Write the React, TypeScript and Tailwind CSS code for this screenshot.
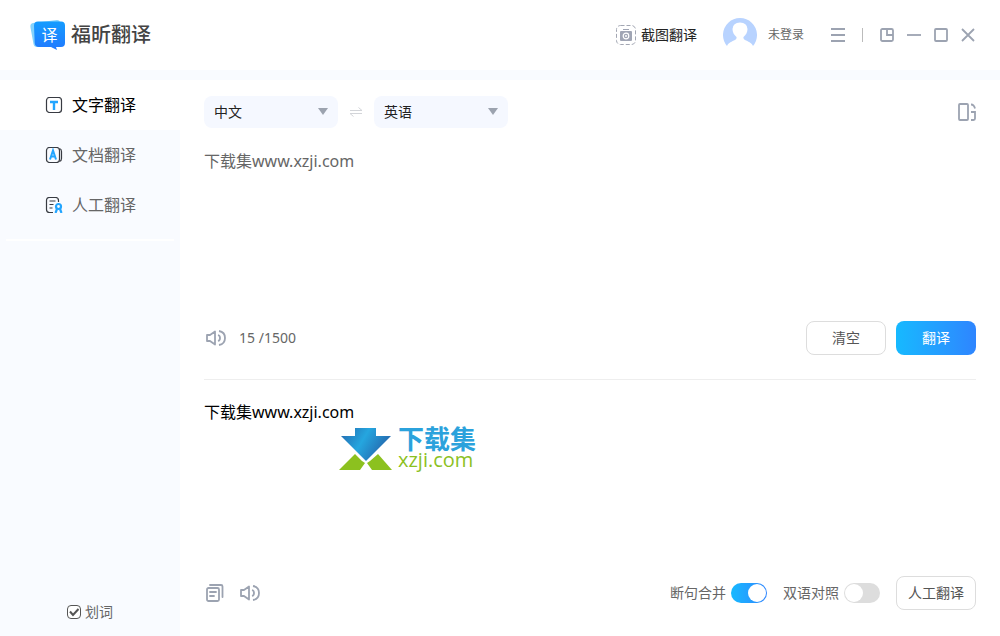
import React, { useState } from "react";

const MAX_LENGTH = 1500;

const LogoIcon = () => (
  <span className="relative block h-[30px] w-[35px]">
    <svg viewBox="0 0 35 30" className="h-full w-full" aria-hidden="true">
      <defs>
        <linearGradient id="logo" x1="0" y1="0" x2="0" y2="1">
          <stop offset="0" stopColor="#149cff" />
          <stop offset="1" stopColor="#2179ff" />
        </linearGradient>
      </defs>
      <path d="M3 3 27 0q3 0 3 3v24H7Q4 27 3.500 24L.4 7Q0 3.500 3 3Z" fill="#84d2fc" />
      <path d="M8 1.500H31q4 0 4 4V23q0 4-4 4h-5l1 3-6-3H9q-4 0-4.300-4L4 5.500q0-4 4-4Z" fill="url(#logo)" />
    </svg>
    <span className="absolute inset-0 flex items-center justify-center pl-1 text-base leading-none font-normal text-white">
      译
    </span>
  </span>
);

const CaptureIcon = () => (
  <svg viewBox="0 0 20 20" className="h-5 w-5" fill="none" aria-hidden="true">
    <rect x=".5" y=".5" width="19" height="19" rx="4" stroke="#a3a7b3" strokeDasharray="4 2" />
    <path d="M7 4h6v1H7zM5 6h10q1 0 1 1v8q0 1-1 1H5q-1 0-1-1V7q0-1 1-1Z" fill="#a0a5b4" />
    <circle cx="10" cy="11" r="2.800" stroke="#fff" strokeWidth="1.200" />
    <circle cx="10" cy="11" r="1" fill="#fff" />
  </svg>
);

const AvatarIcon = () => (
  <svg viewBox="0 0 34 34" className="h-[34px] w-[34px]" aria-hidden="true">
    <path
      d="M4 28A17 17 0 1 1 30 28C28.500 24.500 25 23.500 22 22q-2-1-1.500-3C23 17 24.500 14 24.500 11q-.5-6.500-7.500-6.500T9.500 11c0 3 1.500 6 4 8q.5 2-1.500 3C9 23.500 5.500 24.500 4 28Z"
      fill="#b8d3ff"
    />
  </svg>
);

const windowIcons = [
  { label: "置顶", path: "M2.500 1h9q1.500 0 1.500 1.500v9q0 1.500-1.500 1.500h-9Q1 13 1 11.500v-9Q1 1 2.500 1ZM7 1v6h6" },
  { label: "最小化", path: "M0 7h14" },
  { label: "最大化", path: "M2 1h10q1 0 1 1v10q0 1-1 1H2q-1 0-1-1V2q0-1 1-1Z" },
  { label: "关闭", path: "M1 1l12 12M13 1 1 13" },
];

const SpeakerIcon = () => (
  <svg
    viewBox="0 0 20 16"
    className="h-4 w-5"
    fill="none"
    stroke="#9ca3b1"
    strokeWidth="1.800"
    strokeLinejoin="round"
    aria-hidden="true"
  >
    <path d="M1 5h3l5-3.500v13L4 11H1ZM12 5q2 .5 2 3t-2 3M13 1q6 1 6 7t-6 7" />
  </svg>
);

const CopyIcon = () => (
  <svg
    viewBox="0 0 18 18"
    className="h-[18px] w-[18px]"
    fill="none"
    stroke="#9ca3b1"
    strokeWidth="1.800"
    strokeLinecap="round"
    aria-hidden="true"
  >
    <rect x="1" y="4" width="12" height="13" rx="1.500" />
    <path d="M4 1h11q1.500 0 1.500 1.500V13M4 8h6M4 12h4" />
  </svg>
);

const TextIcon = () => (
  <svg viewBox="0 0 18 16" className="h-4 w-[18px]" fill="none" aria-hidden="true">
    <rect x="1.500" y=".5" width="15" height="15" rx="3" stroke="#383b42" strokeWidth="1.200" />
    <path d="M5 5h8M9 5v8" stroke="#22a5ff" strokeWidth="2.400" />
  </svg>
);

const DocumentIcon = () => (
  <svg viewBox="0 0 18 16" className="h-4 w-[18px]" fill="none" aria-hidden="true">
    <rect x="1.500" y=".5" width="13" height="15" rx="3" stroke="#383b42" strokeWidth="1.200" />
    <path d="M14.500 1.500q2 .5 2 3v7q0 2.500-2 3" stroke="#383b42" strokeWidth="1.200" />
    <path d="m5 12.500 3-9 3 9M6 9.500h4" stroke="#22a5ff" strokeWidth="2" />
  </svg>
);

const HumanIcon = () => (
  <svg viewBox="0 0 18 16" className="h-4 w-[18px]" fill="none" aria-hidden="true">
    <path
      d="M8 15.500H4.500q-3 0-3-3v-9q0-3 3-3h6q3 0 3 3V5M4.500 4h6M4.500 7.500h4M4.500 11h3"
      stroke="#383b42"
      strokeWidth="1.200"
    />
    <circle cx="13.500" cy="9.500" r="2.500" stroke="#22a5ff" strokeWidth="2.200" />
    <path d="m12 12-1.500 4M15 12l1.500 4" stroke="#22a5ff" strokeWidth="2.200" />
  </svg>
);

const menuItems = [
  { id: "text", label: "文字翻译", icon: <TextIcon /> },
  { id: "document", label: "文档翻译", icon: <DocumentIcon /> },
  { id: "human", label: "人工翻译", icon: <HumanIcon /> },
];

interface LanguageSelectProps {
  label: string;
  value: string;
  onChange: (value: string) => void;
}

const LanguageSelect = ({ label, value, onChange }: LanguageSelectProps) => (
  <div className="relative">
    <select
      aria-label={label}
      value={value}
      onChange={(e) => onChange(e.target.value)}
      className="h-8 w-[134px] appearance-none rounded-lg bg-[#f5f8ff] px-2.5 text-sm text-[#222] outline-none"
    >
      <option>中文</option>
      <option>英语</option>
    </select>
    <svg viewBox="0 0 10 7" className="pointer-events-none absolute top-3 right-2.5 h-[7px] w-2.5" aria-hidden="true">
      <path d="M0 0h10L5 7Z" fill="#9ca3af" />
    </svg>
  </div>
);

interface ToggleProps {
  label: string;
  checked: boolean;
  onChange: (checked: boolean) => void;
}

const Toggle = ({ label, checked, onChange }: ToggleProps) => (
  <label className="flex items-center gap-[5px] text-sm text-[#666]">
    {label}
    <input
      type="checkbox"
      role="switch"
      checked={checked}
      onChange={(e) => onChange(e.target.checked)}
      className="peer sr-only"
    />
    <span className="flex h-5 w-9 rounded-full bg-[#ddd] p-px peer-checked:justify-end peer-checked:bg-linear-to-r peer-checked:from-[#16b9ff] peer-checked:to-[#2e85ff]">
      <span className="h-[18px] w-[18px] rounded-full bg-white" />
    </span>
  </label>
);

const Watermark = () => (
  <div className="pointer-events-none absolute top-7 left-[135px] flex items-center gap-[5px]">
    <svg viewBox="0 0 54 42" className="h-[42px] w-[54px]" aria-hidden="true">
      <defs>
        <linearGradient id="arrow" x1="0" y1="0" x2="1" y2="0.4">
          <stop offset="0" stopColor="#2467ad" />
          <stop offset=".5" stopColor="#25a6df" />
          <stop offset="1" stopColor="#2467ad" />
        </linearGradient>
      </defs>
      <path d="M16 0h21v8h15L27 33 2 8h14Z" fill="url(#arrow)" />
      <path d="M16 26l7 7 3 2-5 7H0ZM39 26l14 16H33l-5-7 3-2Z" fill="#8cc11f" />
    </svg>
    <div className="flex flex-col">
      <span className="text-[26px] leading-[22px] font-bold text-[#2ba2dc]">下载集</span>
      <span className="font-['Open_Sans',sans-serif] text-xl leading-5 font-medium text-[#8cc11f]">
        xzji.com
      </span>
    </div>
  </div>
);

const Header = () => (
  <header className="flex h-[70px] items-center justify-between pr-[25px] pl-[30px]">
    <h1 className="flex items-center gap-1.5 text-xl font-medium text-[#444]">
      <LogoIcon />
      福昕翻译
    </h1>
    <div className="flex items-center">
      <button className="flex items-center gap-[5px] text-sm text-[#222]">
        <CaptureIcon />
        截图翻译
      </button>
      <button className="ml-[26px] flex items-center gap-[11px] text-xs text-[#666]">
        <AvatarIcon />
        未登录
      </button>
      <button aria-label="菜单" className="ml-[27px]">
        <svg viewBox="0 0 14 14" className="h-3.5 w-3.5" stroke="#9ca3b1" strokeWidth="1.800" aria-hidden="true">
          <path d="M0 1h14M0 7h14M0 13h14" />
        </svg>
      </button>
      <span className="mx-[17px] h-3.5 w-px bg-[#bbb]" />
      <div className="flex items-center gap-[13px]">
        {windowIcons.map((icon) => (
          <button key={icon.label} aria-label={icon.label}>
            <svg
              viewBox="0 0 14 14"
              className="h-3.5 w-3.5"
              fill="none"
              stroke="#9ca3b1"
              strokeWidth="1.800"
              aria-hidden="true"
            >
              <path d={icon.path} />
            </svg>
          </button>
        ))}
      </div>
    </div>
  </header>
);

const Sidebar = () => {
  const [active, setActive] = useState("text");
  const [pickWords, setPickWords] = useState(true);

  return (
    <aside className="flex w-[180px] shrink-0 flex-col bg-[#f9fbff]">
      <nav>
        {menuItems.map((item) => (
          <button
            key={item.id}
            onClick={() => setActive(item.id)}
            className={`flex h-[50px] w-full items-center gap-[9px] pl-[45px] text-base ${
              active === item.id ? "bg-white text-black" : "text-[#666]"
            }`}
          >
            {item.icon}
            {item.label}
          </button>
        ))}
      </nav>
      <hr className="mx-1.5 mt-[9px] border-t-2 border-white" />
      <label className="mt-auto mb-3.5 flex items-center justify-center gap-1 text-sm text-[#666]">
        <span className="relative h-3.5 w-3.5">
          <input
            type="checkbox"
            checked={pickWords}
            onChange={(e) => setPickWords(e.target.checked)}
            className="peer block h-3.5 w-3.5 appearance-none rounded border border-[#555] bg-white"
          />
          <svg
            viewBox="0 0 14 14"
            className="pointer-events-none absolute inset-0 hidden h-3.5 w-3.5 peer-checked:block"
            fill="none"
            stroke="#555"
            strokeWidth="2"
            aria-hidden="true"
          >
            <path d="m3 6.500 3 3.500 5.500-6" />
          </svg>
        </span>
        划词
      </label>
    </aside>
  );
};

const outlineButton = "h-[34px] w-20 rounded-lg border border-[#ddd] bg-white text-sm text-[#555]";

const Translator = () => {
  const [source, setSource] = useState("中文");
  const [target, setTarget] = useState("英语");
  const [text, setText] = useState("下载集www.xzji.com");
  const [result, setResult] = useState("下载集www.xzji.com");
  const [merge, setMerge] = useState(true);
  const [bilingual, setBilingual] = useState(false);

  const handleSwap = () => {
    setSource(target);
    setTarget(source);
  };

  return (
    <main className="flex flex-1 flex-col px-6 pt-4 pb-[26px]">
      <div className="flex items-center justify-between">
        <div className="flex items-center gap-[11px]">
          <LanguageSelect label="源语言" value={source} onChange={setSource} />
          <button aria-label="交换语言" onClick={handleSwap}>
            <svg viewBox="0 0 14 10" className="h-2.5 w-3.5" fill="none" stroke="#d3d5d9" aria-hidden="true">
              <path d="M1 3.500h12L9.500 .5M13 6.500H1l3.500 3" />
            </svg>
          </button>
          <LanguageSelect label="目标语言" value={target} onChange={setTarget} />
        </div>
        <button aria-label="切换布局">
          <svg
            viewBox="0 0 18 18"
            className="h-[18px] w-[18px]"
            fill="none"
            stroke="#9ca3b1"
            strokeWidth="1.800"
            aria-hidden="true"
          >
            <rect x="1" y="1" width="9" height="16" rx="1" />
            <path d="M13 1.500q3 0 4 4M13 9h4v6.500q0 1.500-1.500 1.500H13" />
          </svg>
        </button>
      </div>

      <textarea
        aria-label="原文"
        rows={7}
        maxLength={MAX_LENGTH}
        value={text}
        onChange={(e) => setText(e.target.value)}
        className="mt-[21px] block w-full resize-none bg-transparent text-base leading-6 text-[#666] outline-none"
      />

      <div className="mt-1 flex items-center justify-between">
        <div className="flex items-center gap-[13px] pl-0.5 text-sm text-[#666]">
          <button aria-label="朗读原文">
            <SpeakerIcon />
          </button>
          <span>
            {text.length} /{MAX_LENGTH}
          </span>
        </div>
        <div className="flex gap-2.5">
          <button className={outlineButton} onClick={() => setText("")}>
            清空
          </button>
          <button
            onClick={() => setResult(text)}
            className="h-[34px] w-20 rounded-lg bg-linear-to-r from-[#16b9ff] to-[#2e85ff] text-sm text-white"
          >
            翻译
          </button>
        </div>
      </div>

      <hr className="mt-6 border-[#eee]" />

      <section className="relative mt-5 flex-1">
        <p className="text-base leading-6 text-black">{result}</p>
        <Watermark />
      </section>

      <div className="flex items-center justify-between">
        <div className="flex items-center gap-4 pl-0.5">
          <button aria-label="复制">
            <CopyIcon />
          </button>
          <button aria-label="朗读译文">
            <SpeakerIcon />
          </button>
        </div>
        <div className="flex items-center gap-4">
          <Toggle label="断句合并" checked={merge} onChange={setMerge} />
          <Toggle label="双语对照" checked={bilingual} onChange={setBilingual} />
          <button className={outlineButton}>人工翻译</button>
        </div>
      </div>
    </main>
  );
};

const App = () => {
  return (
    <div className="flex min-h-screen flex-col bg-white font-['Noto_Sans','Noto_Sans_CJK_SC',sans-serif]">
      <Header />
      <div className="h-2.5 bg-[#f9fbff]" />
      <div className="flex flex-1">
        <Sidebar />
        <Translator />
      </div>
    </div>
  );
};

export default App;
